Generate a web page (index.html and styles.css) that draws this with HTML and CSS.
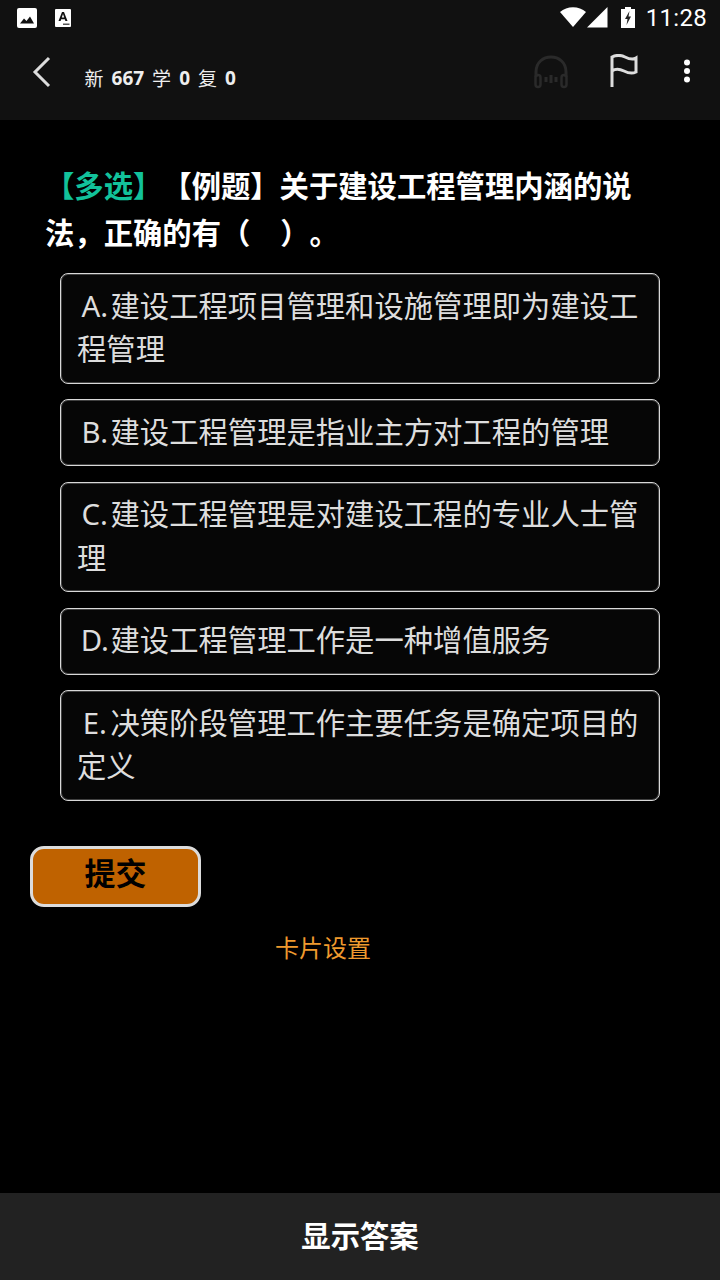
FILE: index.html
```html
<!DOCTYPE html>
<html lang="zh-CN">
<head>
<meta charset="utf-8">
<title>卡片</title>
<link rel="stylesheet" href="styles.css">
</head>
<body>
<div class="app">
  <header class="top">
    <div class="status">
      <svg class="st-img" width="20" height="20" viewBox="0 0 20 20"><rect x="0" y="0" width="20" height="20" rx="2" fill="#fff"/><path d="M3 15.5 L7 10.5 L9.5 13 L13 8.5 L17 15.5 Z" fill="#111"/></svg>
      <svg class="st-a" width="16" height="18" viewBox="0 0 16 18"><rect width="16" height="18" rx="1" fill="#fff"/><path d="M3.5 12 L7 3 H9 L12.5 12 H10.4 L9.8 10.2 H6.2 L5.6 12 Z M6.8 8.4 H9.2 L8 5 Z" fill="#111" fill-rule="evenodd"/><rect x="8" y="14.5" width="6.5" height="1.5" fill="#555"/></svg>
      <span class="grow"></span>
      <svg class="st-wifi" width="26" height="20" viewBox="0 0 26 20"><path d="M13 20 L0 5 C7-1.500 19-1.500 26 5 Z" fill="#fff"/></svg>
      <svg class="st-sig" width="21" height="21" viewBox="0 0 21 21"><path d="M0 20.500 L20.500 0 V20.500 Z" fill="#fff"/></svg>
      <svg class="st-bat" width="14" height="21" viewBox="0 0 14 21"><path d="M4 0 H10 V2 H14 V21 H0 V2 H4 Z" fill="#fff"/><path d="M8.500 4 L4 12 H6.500 L5.500 18 L10 9.500 H7.500 Z" fill="#222"/></svg>
      <span class="clock">11:28</span>
    </div>
    <div class="nav">
      <svg class="back" width="20" height="32" viewBox="0 0 20 32"><path d="M17 2 L3 16 L17 30" fill="none" stroke="#ddd" stroke-width="3"/></svg>
      <div class="counts"><span>新</span><b>667</b><span>学</span><b>0</b><span>复</span><b>0</b></div>
      <span class="grow"></span>
      <svg class="head" width="34" height="34" viewBox="0 0 34 34"><path d="M2 22 V17 C2 -3 32 -3 32 17 V22" fill="none" stroke="#2a2a2a" stroke-width="3"/><rect x="1.500" y="20" width="5" height="12" rx="2.500" fill="none" stroke="#2a2a2a" stroke-width="2.500"/><rect x="27.500" y="20" width="5" height="12" rx="2.500" fill="none" stroke="#2a2a2a" stroke-width="2.500"/><path d="M12 22 V27 M17 20 V28 M22 22 V27" stroke="#2a2a2a" stroke-width="3"/></svg>
      <svg class="flag" width="30" height="34" viewBox="0 0 30 34"><path d="M2 33 V3 C6 1 11 1 15 3 C19 5 23 6 26 4 V18 C22 20 18 19 14 17 C10 15 6 14 2 17" fill="none" stroke="#ddd" stroke-width="3"/></svg>
      <svg class="more" width="8" height="24" viewBox="0 0 8 24"><circle cx="4" cy="3.500" r="3" fill="#fff"/><circle cx="4" cy="12" r="3" fill="#fff"/><circle cx="4" cy="20.500" r="3" fill="#fff"/></svg>
    </div>
  </header>

  <main class="content">
    <h1 class="question"><span class="tag">【多选】</span>【例题】关于建设工程管理内涵的说法，正确的有（<span class="blank"></span>）。</h1>
    <ul class="options">
      <li class="option"><span class="letter">A.</span>建设工程项目管理和设施管理即为建设工程管理</li>
      <li class="option"><span class="letter">B.</span>建设工程管理是指业主方对工程的管理</li>
      <li class="option"><span class="letter">C.</span>建设工程管理是对建设工程的专业人士管理</li>
      <li class="option"><span class="letter">D.</span>建设工程管理工作是一种增值服务</li>
      <li class="option"><span class="letter">E.</span>决策阶段管理工作主要任务是确定项目的定义</li>
    </ul>
    <button class="submit">提交</button>
    <a class="settings">卡片设置</a>
  </main>

  <footer class="bottom">显示答案</footer>
</div>
</body>
</html>
```
FILE: styles.css
```css
* { box-sizing: border-box; }
html, body { margin: 0; padding: 0; background: #000; }
body { font-family: "Noto Sans CJK SC", "Noto Sans", sans-serif; text-spacing-trim: space-all; }
.app { width: 720px; height: 1280px; display: flex; flex-direction: column; background: #000; overflow: hidden; }
.grow { flex: 1; }

.top { height: 120px; background: #111; flex: none; }
.status { height: 36px; display: flex; align-items: center; padding: 0 13px 0 17px; }
.st-a { margin-left: 18px; }
.st-sig { margin-left: 1px; margin-top: -2px; }
.st-wifi { margin-top: -3px; }
.st-bat { margin-left: 13px; margin-top: -1px; }
.clock { font-family: Roboto, sans-serif; font-size: 24px; color: #fff; margin-left: 11px; line-height: 36px; letter-spacing: 0.3px; }

.nav { height: 84px; display: flex; align-items: flex-start; padding-right: 29px; }
.back { margin: 20px 0 0 32px; }
.counts { margin: 27px 0 0 32.500px; display: flex; gap: 8px; color: #eee; font-size: 19px; line-height: 30px; }
.counts b { font-family: "Open Sans", sans-serif; font-weight: 700; font-size: 19px; }
.head { margin-top: 19px; }
.flag { margin: 18px 0 0 42px; }
.more { margin: 23px 0 0 43px; }

.content { flex: 1; display: flex; flex-direction: column; align-items: flex-start; padding: 41px 0 0 0; }
.question { margin: 0; padding: 0 60px 0 45px; width: 100%; font-size: 29.330px; line-height: 47px; font-weight: 700; color: #fff; }
.tag { color: #12c29b; }
.blank { display: inline-block; width: 30px; }
.options { list-style: none; margin: 18px 0 0 60px; padding: 0; width: 600px; display: flex; flex-direction: column; gap: 15.500px; }
.option { border: 1px solid #d8d8d8; border-radius: 8px; background: #060606; box-shadow: inset 0 0 0 1px rgba(200, 200, 200, 0.3); padding: 8.500px 16px 13px; font-size: 29.330px; line-height: 43.500px; color: #ddd; }
.letter { display: inline-block; width: 33.500px; padding-left: 2px; text-align: center; font-family: "Noto Sans", sans-serif; line-height: 1; }
.submit { margin: 45px 0 0 30px; width: 171px; height: 61px; border: 3px solid #dcdcdc; border-radius: 14px; background: #bf6200; color: #000; font-family: inherit; font-weight: 700; font-size: 31px; line-height: 46px; padding: 0 0 12px; }
.settings { margin: 23px 0 0 275px; font-size: 24px; line-height: 34px; color: #ef9a2e; }

.bottom { height: 87px; flex: none; background: #222; color: #fff; display: flex; align-items: center; justify-content: center; font-weight: 700; font-size: 29.330px; padding-bottom: 6px; }
```
